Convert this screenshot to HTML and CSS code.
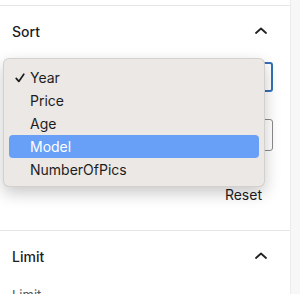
FILE: index.html
```html
<!DOCTYPE html>
<html lang="en">
<head>
    <meta charset="UTF-8">
    <meta name="viewport" content="width=device-width, initial-scale=1.0">
    <title>Filters</title>
    <link rel="stylesheet" href="styles.css">
</head>
<body>
    <aside class="panel">
        <div class="panel-top"></div>

        <!-- Sort section -->
        <section class="section">
            <div class="section-header">
                <h2 class="section-title">Sort</h2>
                <svg class="chevron" width="12" height="7" viewBox="0 0 12 7">
                    <path d="M1 6 L6 1.5 L11 6" fill="none" stroke="#222" stroke-width="1.8" stroke-linecap="round" stroke-linejoin="round"/>
                </svg>
            </div>

            <div class="sort-fields">
                <div class="field field-focused"></div>
                <div class="field"></div>
            </div>

            <div class="reset-row">
                <button class="reset-btn">Reset</button>
            </div>

            <!-- Native select menu, open -->
            <ul class="select-menu">
                <li class="menu-item checked">
                    <svg class="check" width="10" height="10" viewBox="0 0 10 10">
                        <path d="M1.2 5.4 L3.8 8.4 L8.8 1.2" fill="none" stroke="#1d1d1f" stroke-width="1.7" stroke-linecap="round" stroke-linejoin="round"/>
                    </svg>
                    Year
                </li>
                <li class="menu-item">Price</li>
                <li class="menu-item">Age</li>
                <li class="menu-item active">Model</li>
                <li class="menu-item">NumberOfPics</li>
            </ul>
        </section>

        <!-- Limit section -->
        <section class="section">
            <div class="section-header">
                <h2 class="section-title">Limit</h2>
                <svg class="chevron" width="12" height="7" viewBox="0 0 12 7">
                    <path d="M1 6 L6 1.5 L11 6" fill="none" stroke="#222" stroke-width="1.8" stroke-linecap="round" stroke-linejoin="round"/>
                </svg>
            </div>
            <label class="field-label">Limit</label>
        </section>
    </aside>
</body>
</html>
```

FILE: styles.css
```css
:root {
    --text: #1d1d1f;
    --border: #e6e6e6;
    --menu-bg: #ece8e5;
    --highlight: #68a0f8;
    --focus: #3470b8;
}

body {
    margin: 0;
    padding: 0;
    font-family: 'Inter', 'Liberation Sans', sans-serif;
    background: #f7f7f8;
    color: var(--text);
    height: 294px;
    overflow: hidden;
}

.panel {
    width: 290px;
    height: 294px;
    background: #fff;
    border-right: 1px solid #ececec;
    overflow: hidden;
}

.panel-top {
    height: 5px;
    border-bottom: 1px solid var(--border);
}

.section {
    position: relative;
    padding: 16px 12px 0;
    border-bottom: 1px solid var(--border);
}

.section-header {
    display: flex;
    justify-content: space-between;
    align-items: center;
    height: 20px;
}

.section-title {
    margin: 0;
    font-size: 14px;
    font-weight: 500;
    line-height: 20px;
}

.chevron {
    margin-right: 11px;
    margin-top: -3px;
}

.sort-fields {
    display: flex;
    flex-direction: column;
    gap: 27px;
    margin-top: 20px;
    margin-right: 5px;
}

.field {
    height: 30px;
    border: 1px solid #8a8a8a;
    border-radius: 3px;
    box-sizing: border-box;
    height: 32px;
}

.field-focused {
    height: 30px;
    border: 2px solid var(--focus);
}

.reset-row {
    display: flex;
    justify-content: flex-end;
    margin-top: 34px;
    padding-bottom: 25px;
    padding-right: 16px;
}

.reset-btn {
    background: none;
    border: none;
    padding: 0;
    font-family: inherit;
    font-size: 14px;
    line-height: 20px;
    color: var(--text);
    cursor: pointer;
}

.select-menu {
    position: absolute;
    left: 3px;
    top: 52px;
    width: 262px;
    margin: 0;
    padding: 7px 5px 5px;
    box-sizing: border-box;
    list-style: none;
    background: var(--menu-bg);
    border: 1px solid rgba(0, 0, 0, 0.1);
    border-radius: 6px;
    box-shadow: 0 6px 16px rgba(0, 0, 0, 0.22);
}

.menu-item {
    position: relative;
    height: 23px;
    line-height: 23px;
    padding-left: 21px;
    font-size: 14px;
    border-radius: 4px;
}

.menu-item.active {
    background: var(--highlight);
    color: #fff;
}

.check {
    position: absolute;
    left: 6px;
    top: 7px;
}

.field-label {
    display: block;
    margin-top: 19px;
    font-size: 13px;
    line-height: 18px;
    color: #555;
}
```
